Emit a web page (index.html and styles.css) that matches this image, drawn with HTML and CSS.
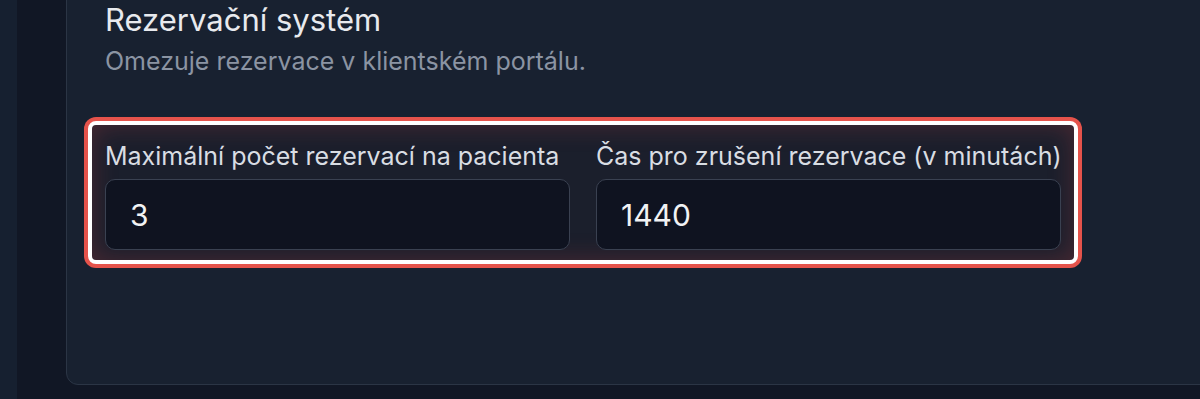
FILE: index.html
```html
<!DOCTYPE html>
<html lang="cs">
<head>
  <meta charset="UTF-8">
  <title>Rezervační systém</title>
  <link rel="stylesheet" href="styles.css">
</head>
<body>

<div class="layout">
  <div class="sidebar-edge"></div>

  <main class="content">
    <section class="settings-card">
      <h2>Rezervační systém</h2>
      <p class="card-desc">Omezuje rezervace v klientském portálu.</p>

      <!-- highlighted fields -->
      <div class="highlight">
        <div class="field-grid">
          <label class="field">
            <span class="field-label">Maximální počet rezervací na pacienta</span>
            <input type="text" value="3">
          </label>
          <label class="field">
            <span class="field-label">Čas pro zrušení rezervace (v minutách)</span>
            <input type="text" value="1440">
          </label>
        </div>
      </div>
    </section>
  </main>
</div>

</body>
</html>
```

FILE: styles.css
```css
body {
  margin: 0;
  background: #111725;
  font-family: Inter, "Noto Sans", sans-serif;
  color: #e5e7eb;
  overflow: hidden;
  height: 399px;
}

.layout {
  display: flex;
  height: 399px;
}

.sidebar-edge {
  width: 17px;
  flex-shrink: 0;
  background: #162030;
}

.content {
  padding-left: 49px;
  flex: 1;
}

.settings-card {
  width: 1300px;
  margin-top: -20px;
  padding: 20px 0 120px 38px;
  background: #182130;
  border: 1px solid #2b3545;
  border-radius: 12px;
}

.settings-card h2 {
  margin: 0;
  font-size: 31px;
  font-weight: 400;
  line-height: 38px;
  color: #e8eaee;
}

.card-desc {
  margin: 7px 0 0 0;
  font-size: 25px;
  line-height: 30px;
  color: #8b94a3;
}

.highlight {
  width: 956px;
  margin: 45px 0 0 -17px;
  padding: 16px 13px 10px 13px;
  border: 4px solid #ffffff;
  border-radius: 8px;
  box-shadow: 0 0 0 4px #e5534b, inset 0 0 26px rgba(200, 70, 70, 0.28);
  background: #1b1f2c;
}

.field-grid {
  display: grid;
  grid-template-columns: minmax(0, 1fr) minmax(0, 1fr);
  gap: 26px;
}

.field {
  display: flex;
  flex-direction: column;
  gap: 8px;
  min-width: 0;
}

.field-label {
  font-size: 25px;
  line-height: 30px;
  color: #d9dde3;
  white-space: nowrap;
}

.field input {
  width: 100%;
  min-width: 0;
  height: 71px;
  box-sizing: border-box;
  padding: 0 24px;
  background: #0f1320;
  border: 1px solid #3a4151;
  border-radius: 10px;
  font-family: inherit;
  font-size: 30px;
  color: #f1f2f4;
  outline: none;
}
```
